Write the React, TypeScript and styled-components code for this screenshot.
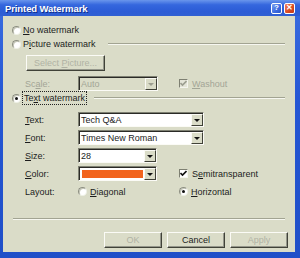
import React from 'react';
import styled, { createGlobalStyle } from 'styled-components';

const GlobalStyle = createGlobalStyle`
  html, body {
    margin: 0;
    padding: 0;
    overflow: hidden;
    background: #fff;
  }
  * { box-sizing: border-box; }
`;

const FACE = '#dadcc8';
const DISABLED = '#a3a596';

const Window = styled.div`
  width: 300px;
  height: 258px;
  display: flex;
  flex-direction: column;
  background: linear-gradient(180deg, #3a6de0 0%, #2456d4 40%, #1f4fc8 100%);
  font-family: "Liberation Sans", Arial, sans-serif;
  font-size: 9px;
  color: #1c1c1c;
`;

const TitleBar = styled.div`
  height: 16px;
  display: flex;
  align-items: center;
  padding: 0 5px 0 5px;
  background: linear-gradient(180deg, #6a96ec 0%, #3567de 30%, #2c5cd6 70%, #2f5fd2 100%);
`;

const Title = styled.div`
  flex: 1;
  color: #fff;
  font-weight: bold;
  font-size: 9.5px;
  letter-spacing: -0.1px;
  text-shadow: 1px 1px 0 #0d2f8a;
`;

const TitleButton = styled.div<{ $close?: boolean }>`
  width: 11px;
  height: 11px;
  margin-left: 2px;
  border: 1px solid #fff;
  border-radius: 2px;
  display: flex;
  align-items: center;
  justify-content: center;
  background: ${p => (p.$close
    ? 'linear-gradient(135deg, #f08060 0%, #d84a22 60%, #c03a18 100%)'
    : 'linear-gradient(135deg, #7aa0f0 0%, #3c6ae0 60%, #2a56c8 100%)')};
  color: #fff;
  font-weight: bold;
  font-size: 8px;
  line-height: 1;
`;

const Body = styled.div`
  flex: 1;
  margin: 0 5px 6px 3px;
  background: ${FACE};
  padding: 7px 10px 0 9px;
  display: flex;
  flex-direction: column;
`;

const OptionRow = styled.div<{ $mt?: number; $h?: number }>`
  height: ${p => p.$h ?? 14}px;
  margin-top: ${p => p.$mt ?? 0}px;
  display: flex;
  align-items: center;
`;

const Radio = styled.span<{ $checked?: boolean }>`
  width: 9px;
  height: 9px;
  border-radius: 50%;
  background: #fff;
  border: 1px solid;
  border-color: #8c8e80 #eef0e6 #eef0e6 #8c8e80;
  box-shadow: inset 1px 1px 0 #c4c6b6;
  display: inline-flex;
  align-items: center;
  justify-content: center;
  flex: none;

  &::after {
    content: '';
    width: 3px;
    height: 3px;
    border-radius: 50%;
    background: ${p => (p.$checked ? '#111' : 'transparent')};
  }
`;

const Check = styled.span<{ $disabled?: boolean }>`
  width: 9px;
  height: 9px;
  flex: none;
  background: ${p => (p.$disabled ? '#e4e5d8' : '#fff')};
  border: 1px solid;
  border-color: #7e8072 #f4f5ee #f4f5ee #7e8072;
  display: inline-flex;
  align-items: center;
  justify-content: center;

  svg { display: block; }
`;

const Label = styled.span<{ $disabled?: boolean; $gap?: number }>`
  margin-left: ${p => p.$gap ?? 2}px;
  color: ${p => (p.$disabled ? DISABLED : '#1c1c1c')};
  white-space: nowrap;
`;

const Focused = styled.span`
  margin-left: 1px;
  padding: 1px 1px;
  border: 1px dotted #222;
  white-space: nowrap;
`;

const GroupLine = styled.div<{ $gap: number }>`
  flex: 1;
  margin-left: ${p => p.$gap}px;
  height: 2px;
  border-top: 1px solid #a2a492;
  border-bottom: 1px solid #f6f7f0;
`;

const Button = styled.div<{ $disabled?: boolean; $w: number }>`
  width: ${p => p.$w}px;
  height: 16px;
  display: flex;
  align-items: center;
  justify-content: center;
  background: ${FACE};
  border: 1px solid;
  border-color: #fbfbf6 #404238 #404238 #fbfbf6;
  box-shadow: inset -1px -1px 0 #94968a;
  color: ${p => (p.$disabled ? '#b0b2a4' : '#1c1c1c')};
  white-space: nowrap;
`;

const FormGrid = styled.div<{ $mt?: number }>`
  margin-top: ${p => p.$mt ?? 0}px;
  margin-left: 13px;
  display: grid;
  grid-template-columns: 53px 101px auto;
  grid-auto-rows: 15px;
  row-gap: 3px;
  align-items: center;
`;

const FieldLabel = styled.span<{ $disabled?: boolean }>`
  color: ${p => (p.$disabled ? DISABLED : '#1c1c1c')};
  white-space: nowrap;
`;

const Field = styled.div<{ $w: number; $disabled?: boolean; $span?: boolean }>`
  width: ${p => p.$w}px;
  height: 15px;
  grid-column: ${p => (p.$span ? 'span 2' : 'auto')};
  display: flex;
  align-items: stretch;
  background: ${p => (p.$disabled ? FACE : '#fff')};
  border: 1px solid;
  border-color: #7e8072 #fbfbf6 #fbfbf6 #7e8072;
  box-shadow: inset 1px 1px 0 #2a2a26;
  color: ${p => (p.$disabled ? DISABLED : '#1c1c1c')};
`;

const FieldText = styled.div`
  flex: 1;
  padding: 0 0 0 2px;
  margin-top: 1px;
  display: flex;
  align-items: center;
  white-space: nowrap;
  overflow: hidden;
`;

const Swatch = styled.div`
  flex: 1;
  margin: 3px 1px 2px 3px;
  background: #f2641e;
`;

const ArrowBox = styled.div<{ $disabled?: boolean }>`
  width: 12px;
  margin: 1px 0 0 0;
  background: ${FACE};
  border: 1px solid;
  border-color: #fbfbf6 #404238 #404238 #fbfbf6;
  display: flex;
  align-items: center;
  justify-content: center;

  &::after {
    content: '';
    border-left: 3px solid transparent;
    border-right: 3px solid transparent;
    border-top: 3px solid ${p => (p.$disabled ? '#9c9e90' : '#111')};
  }
`;

const Options = styled.div`
  display: flex;
  align-items: center;
`;

const Separator = styled.div`
  margin-top: 19px;
  margin-left: 1px;
  height: 2px;
  border-top: 1px solid #a2a492;
  border-bottom: 1px solid #f6f7f0;
`;

const ButtonBar = styled.div`
  margin-top: 12px;
  margin-right: -3px;
  display: flex;
  justify-content: flex-end;
  gap: 5px;
`;

const Indent = styled.span`
  width: 14px;
  flex: none;
`;

const U = styled.span`
  text-decoration: underline;
`;

function CheckMark({ color }: { color: string }) {
  return (
    <svg width="7" height="7" viewBox="0 0 7 7">
      <path d="M0.5 3 L2.5 5 L6.5 1" stroke={color} strokeWidth="1.6" fill="none" />
    </svg>
  );
}

function Combo(props: { w: number; value?: string; disabled?: boolean; span?: boolean; swatch?: boolean }) {
  return (
    <Field $w={props.w} $disabled={props.disabled} $span={props.span}>
      {props.swatch ? <Swatch /> : <FieldText>{props.value}</FieldText>}
      <ArrowBox $disabled={props.disabled} />
    </Field>
  );
}

export default function App() {
  return (
    <>
      <GlobalStyle />
      <Window>
        <TitleBar>
          <Title>Printed Watermark</Title>
          <TitleButton>?</TitleButton>
          <TitleButton $close>✕</TitleButton>
        </TitleBar>
        <Body>
          <OptionRow>
            <Radio />
            <Label><U>N</U>o watermark</Label>
          </OptionRow>
          <OptionRow>
            <Radio />
            <Label>P<U>i</U>cture watermark</Label>
            <GroupLine $gap={12} />
          </OptionRow>
          <OptionRow $mt={4} $h={15}>
            <Indent />
            <Button $w={79} $disabled><span>Select <U>P</U>icture...</span></Button>
          </OptionRow>
          <FormGrid $mt={6}>
            <FieldLabel $disabled>Sc<U>a</U>le:</FieldLabel>
            <div><Combo w={80} value="Auto" disabled /></div>
            <Options>
              <Check $disabled><CheckMark color="#9c9e90" /></Check>
              <Label $disabled $gap={4}><U>W</U>ashout</Label>
            </Options>
          </FormGrid>
          <OptionRow>
            <Radio $checked />
            <Focused>Te<U>x</U>t watermark</Focused>
            <GroupLine $gap={7} />
          </OptionRow>
          <FormGrid $mt={7}>
            <FieldLabel><U>T</U>ext:</FieldLabel>
            <Combo w={126} value="Tech Q&A" span />
            <FieldLabel><U>F</U>ont:</FieldLabel>
            <Combo w={126} value="Times New Roman" span />
            <FieldLabel><U>S</U>ize:</FieldLabel>
            <div><Combo w={79} value="28" /></div>
            <span />
            <FieldLabel><U>C</U>olor:</FieldLabel>
            <div><Combo w={79} swatch /></div>
            <Options>
              <Check><CheckMark color="#111" /></Check>
              <Label $gap={4}>S<U>e</U>mitransparent</Label>
            </Options>
            <FieldLabel>Layout:</FieldLabel>
            <Options>
              <Radio />
              <Label $gap={3}><U>D</U>iagonal</Label>
            </Options>
            <Options>
              <Radio $checked />
              <Label $gap={3}><U>H</U>orizontal</Label>
            </Options>
          </FormGrid>
          <Separator />
          <ButtonBar>
            <Button $w={58} $disabled>OK</Button>
            <Button $w={58}>Cancel</Button>
            <Button $w={58} $disabled>Apply</Button>
          </ButtonBar>
        </Body>
      </Window>
    </>
  );
}
